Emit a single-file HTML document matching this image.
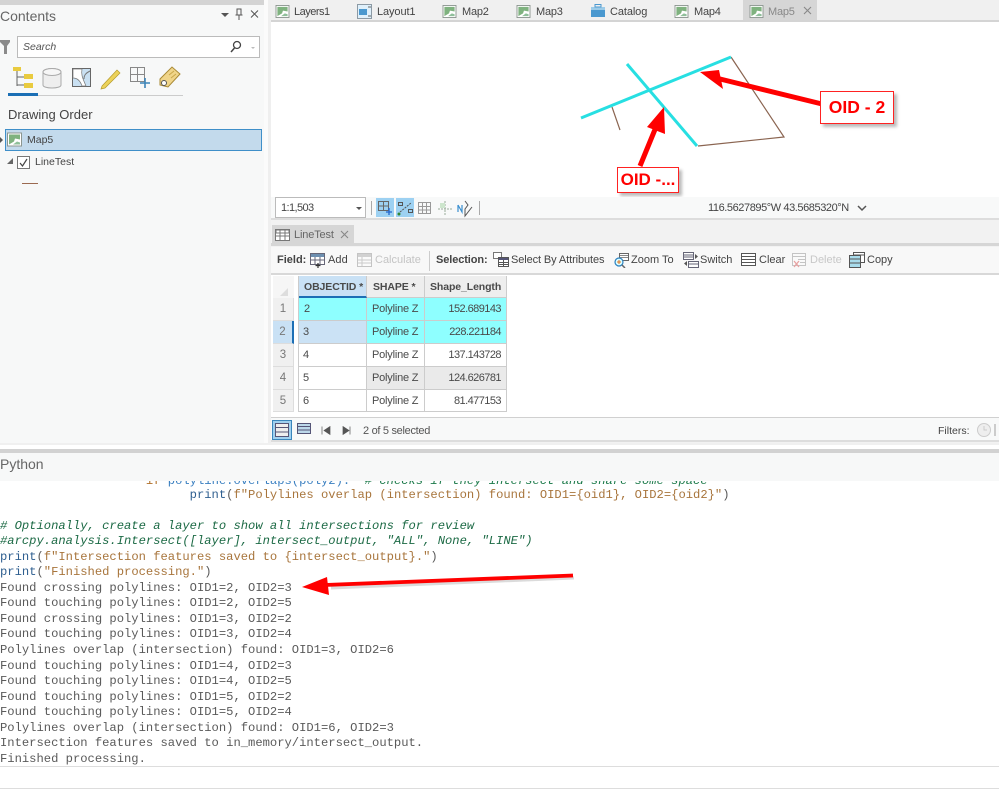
<!DOCTYPE html>
<html><head><meta charset="utf-8">
<style>
html,body{margin:0;padding:0}
body{width:999px;height:789px;overflow:hidden;background:#fff;position:relative;font-family:"Liberation Sans",sans-serif;font-size:11px;color:#444}
.a{position:absolute}
.t{position:absolute;white-space:nowrap;line-height:14px}
.ic{position:absolute;width:15px;height:13px}
.m{position:absolute;left:0;white-space:pre;font-family:"Liberation Mono",monospace;font-size:12.17px;line-height:15px;color:#5a5a5a}
.cell{position:absolute;box-sizing:border-box;line-height:23px;font-size:11px;color:#4a4a4a;border-right:1px solid #ccc;border-bottom:1px solid #ccc;padding:0 4px;white-space:nowrap}
.r{text-align:right;letter-spacing:-.55px;padding-right:5px}
.n{text-align:center;color:#777;padding:0;background:#f0f0f0;border-color:#ddd;font-size:11.5px}
.h{font-weight:bold;font-size:10.5px;line-height:22px;letter-spacing:-.1px}
</style></head><body>

<!-- shared map icon -->
<svg width="0" height="0" style="position:absolute"><defs>
<symbol id="mi" viewBox="0 0 15 14"><rect x=".5" y=".5" width="14" height="13" fill="#fff" stroke="#8c9690"/><path d="M2 2h11v5L8 6 7 9l-5 3z" fill="#7fb27f"/><path d="M6 12l4-3 3 1v2z" fill="#8fbf9a"/></symbol>
<symbol id="ti" viewBox="0 0 15 14"><rect x=".5" y="2.500" width="14" height="11" fill="#fff" stroke="#777"/><path d="M1 3h13v3H1zM1 9h13M5 3v10M10 3v10" fill="none" stroke="#777"/></symbol>
</defs></svg>

<!-- left pane -->
<div class="a" style="left:0;top:0;width:264px;height:443px;background:#f7f8f8"></div>
<div class="a" style="left:0;top:0;width:264px;height:5px;background:#d4d4d4"></div>
<div class="a" style="left:264px;top:0;width:7px;height:445px;background:#efefef"></div>
<div class="a" style="left:264px;top:0;width:4px;height:445px;background:#fbfbfb"></div>
<div class="t" style="left:0;top:7px;font-size:14px;line-height:18px;color:#666">Contents</div>
<svg class="a" style="left:218px;top:5px" width="50" height="18"><path d="M3 8h8l-4 4z" fill="#555"/><path d="M19 4h4v6h-4zM21 10v5M17.500 10h7" stroke="#555" fill="none"/><path d="M33 5.500l7 7M40 5.500l-7 7" stroke="#555" fill="none"/></svg>
<svg class="a" style="left:0;top:39px" width="12" height="16"><path d="M0 1h10v2L7 7v8H4V7L0 3z" fill="#8a8a8a"/></svg>
<div class="a" style="left:17px;top:36px;width:243px;height:22px;box-sizing:border-box;background:#fff;border:1px solid #bbb"></div>
<div class="t" style="left:23px;top:40px;font-style:italic;font-size:10.500px;color:#555">Search</div>
<svg class="a" style="left:229px;top:39px" width="30" height="16"><circle cx="8" cy="6" r="3.500" fill="none" stroke="#444" stroke-width="1.300"/><path d="M5.500 9L2 13" stroke="#444" stroke-width="1.500"/><path d="M22 8h4l-2 2z" fill="#bbb"/></svg>
<svg class="a" style="left:10px;top:64px" width="175" height="30">
<path d="M3 3h8v4H3z" fill="#e9cb3f"/><path d="M7 7v15M7 13h7M7 21h7" stroke="#666" fill="none"/><path d="M14 10h9v5h-9zM14 19h9v5h-9z" fill="#e9cb3f"/>
<ellipse cx="42" cy="8" rx="9" ry="3.500" fill="#f0f0f0" stroke="#aaa"/><path d="M33 8v13c0 4 18 4 18 0V8" fill="#eee" stroke="#aaa"/><ellipse cx="42" cy="8" rx="9" ry="3.500" fill="#f6f6f6" stroke="#aaa"/>
<path d="M62.500 4.500h18v18h-18z" fill="#c9e0f2" stroke="#666"/><path d="M63 5h9c-1 5 0 8 4 17H72c-2-6-5-8-9-8z" fill="#fff" stroke="#777" stroke-width=".7"/><path d="M80 7c-4 2-6 4-6 8" stroke="#777" fill="none"/>
<path d="M92 22l15-16 3 3-15 15-4 1z" fill="#ecd25a" stroke="#b59b2c" stroke-width=".7"/>
<path d="M120.500 3.500h14v14h-14zM127.500 3v14M120 10.500h14" fill="none" stroke="#888"/><path d="M135 14v10M130 19h10" stroke="#3c84b8" stroke-width="1.600"/>
<path d="M150 15l12-12 8 7-12 13-8-2z" fill="#f0d58a" stroke="#a98a35" stroke-width="1"/><path d="M159 11l5-4M161 14l5-4" stroke="#c9a74a"/><circle cx="154" cy="19" r="2.500" fill="#fff" stroke="#555"/>
</svg>
<div class="a" style="left:8px;top:95px;width:175px;height:1px;background:#ccc"></div>
<div class="a" style="left:8px;top:93px;width:30px;height:3px;background:#1b6fb5"></div>
<div class="t" style="left:8px;top:107px;font-size:13px;line-height:16px;color:#444">Drawing Order</div>
<div class="a" style="left:5px;top:129px;width:257px;height:22px;box-sizing:border-box;background:#c3daec;border:1px solid #3f8fc9"></div>
<div class="a" style="left:0;top:137px;width:0;height:0;border:3px solid transparent;border-left-color:#555"></div>
<svg class="ic" style="left:7px;top:132px;height:15px"><use href="#mi"/></svg>
<div class="t" style="left:27px;top:133px;font-size:10.500px">Map5</div>
<div class="a" style="left:7px;top:158px;width:0;height:0;border-style:solid;border-width:0 0 6px 6px;border-color:transparent transparent #666 transparent"></div>
<div class="a" style="left:17px;top:156px;width:13px;height:13px;box-sizing:border-box;border:1px solid #777;background:#fff"></div>
<svg class="a" style="left:17px;top:156px" width="13" height="13"><path d="M3 7l2.500 3L10 3" fill="none" stroke="#444" stroke-width="1.200"/></svg>
<div class="t" style="left:35px;top:155px;font-size:10.500px">LineTest</div>
<div class="a" style="left:22px;top:183px;width:16px;height:1px;background:#9b6a50"></div>

<!-- tabs -->
<div class="a" style="left:271px;top:0;width:728px;height:20px;background:#f0f0f0"></div>
<div class="a" style="left:271px;top:20px;width:728px;height:2px;background:#d4d4d4"></div>
<div class="a" style="left:743px;top:0;width:74px;height:20px;background:#d6d6d6"></div>
<svg class="ic" style="left:275px;top:5px"><use href="#mi"/></svg><div class="t" style="left:294px;top:5px;letter-spacing:-.5px">Layers1</div>
<svg class="a" style="left:357px;top:4px" width="15" height="15"><rect x=".5" y=".5" width="14" height="14" fill="#dff0fb" stroke="#8c9aa5"/><path d="M2 5h8v6H2z" fill="#4a98cf"/><path d="M11 3h3M11 12h3" stroke="#666"/></svg><div class="t" style="left:377px;top:5px;letter-spacing:-.1px">Layout1</div>
<svg class="ic" style="left:442px;top:5px"><use href="#mi"/></svg><div class="t" style="left:462px;top:5px;letter-spacing:-.2px">Map2</div>
<svg class="ic" style="left:516px;top:5px"><use href="#mi"/></svg><div class="t" style="left:536px;top:5px;letter-spacing:-.2px">Map3</div>
<svg class="a" style="left:590px;top:3px" width="16" height="15"><rect x="1" y="4" width="14" height="10" fill="#4a98cf"/><rect x="1" y="4" width="14" height="3" fill="#9ccbe8"/><rect x="5" y="1.500" width="6" height="2.500" fill="none" stroke="#4a98cf"/></svg><div class="t" style="left:610px;top:5px;letter-spacing:-.1px">Catalog</div>
<svg class="ic" style="left:674px;top:5px"><use href="#mi"/></svg><div class="t" style="left:694px;top:5px;letter-spacing:-.2px">Map4</div>
<svg class="ic" style="left:749px;top:5px"><use href="#mi"/></svg><div class="t" style="left:768px;top:5px;letter-spacing:-.2px;color:#888">Map5</div>
<svg class="a" style="left:803px;top:6px" width="10" height="10"><path d="M1 1l7 7M8 1L1 8" stroke="#888" stroke-width="1.100"/></svg>

<!-- map -->
<svg class="a" style="left:0;top:0" width="999" height="200">
<g fill="none" stroke="#8a6450" stroke-width="1.200">
<path d="M731 57l53 80-86 9"/><path d="M612 107l8 23"/>
</g>
<path d="M581 118L731 57M627 64l70 82" fill="none" stroke="#27dfe2" stroke-width="3"/>
<path d="M822 104L716 78" stroke="#f00" stroke-width="5" fill="none"/>
<path d="M700 72l19-2 4 19z" fill="#f00"/>
<path d="M640 166L656 127" stroke="#f00" stroke-width="5" fill="none"/>
<path d="M664 107l1 27-18-7z" fill="#f00"/>
</svg>
<div class="a" style="left:820px;top:91px;width:74px;height:33px;box-sizing:border-box;background:#fff;border:1px solid #f22;box-shadow:3px 3px 3px #bbb;color:#f00;font-weight:bold;font-size:17.500px;line-height:31px;text-align:center">OID - 2</div>
<div class="a" style="left:617px;top:167px;width:62px;height:26px;box-sizing:border-box;background:#fff;border:1px solid #f22;box-shadow:3px 3px 3px #bbb;color:#f00;font-weight:bold;font-size:17px;line-height:24px;text-align:center;white-space:nowrap">OID -...</div>

<!-- map status bar -->
<div class="a" style="left:271px;top:197px;width:728px;height:21px;background:#f8f9f9"></div>
<div class="a" style="left:271px;top:218px;width:728px;height:2px;background:#ddd"></div>
<div class="a" style="left:275px;top:197px;width:91px;height:21px;box-sizing:border-box;background:#fff;border:1px solid #bbb"></div>
<div class="t" style="left:281px;top:201px;letter-spacing:-.6px;font-size:11px">1:1,503</div>
<div class="a" style="left:356px;top:207px;width:0;height:0;border:3px solid transparent;border-top-color:#555"></div>
<div class="a" style="left:371px;top:201px;width:1px;height:14px;background:#aaa"></div>
<div class="a" style="left:376px;top:198px;width:18px;height:19px;background:#9dd1f2"></div>
<div class="a" style="left:396px;top:198px;width:18px;height:19px;background:#9dd1f2"></div>
<svg class="a" style="left:375px;top:198px" width="112" height="20">
<path d="M3.500 3.500h10v9h-10zM8.500 3.500v9M3.500 8h10" fill="none" stroke="#666"/><path d="M14 10v7M11 14h6" stroke="#26c" stroke-width="1.300"/>
<path d="M23.500 4.500h4v3h-4zM33.500 11.500h4v3h-4z" fill="none" stroke="#555"/><path d="M25 14l11-9" stroke="#555" stroke-dasharray="2 1"/><circle cx="24" cy="16" r="1.500" fill="#383"/>
<path d="M43.500 4.500h12v11h-12zM43.500 8.500h12M43.500 12h12M47.500 4.500v11M51.500 4.500v11" fill="none" stroke="#999"/>
<path d="M70 3v15M63 11h14" stroke="#9a9" stroke-dasharray="2 1"/><rect x="65" y="5" width="5" height="5" fill="#cde6cd"/>
<path d="M83 7v7M83 7l4 7V7" fill="none" stroke="#3a8fd0" stroke-width="1.200"/><path d="M90 3l3 4-3 4v7l7-9" fill="none" stroke="#555"/>
</svg>
<div class="a" style="left:479px;top:201px;width:1px;height:14px;background:#aaa"></div>
<div class="t" style="left:708px;top:201px;font-size:11px;letter-spacing:-.42px">116.5627895°W 43.5685320°N</div>
<svg class="a" style="left:856px;top:204px" width="12" height="10"><path d="M2 2l4 4 4-4" fill="none" stroke="#555" stroke-width="1.500"/></svg>

<!-- attribute table pane -->
<div class="a" style="left:271px;top:220px;width:728px;height:225px;background:#f2f2f2"></div>
<div class="a" style="left:272px;top:225px;width:82px;height:19px;background:#d6d6d6"></div>
<div class="a" style="left:271px;top:243px;width:728px;height:3px;background:#d6d6d6"></div>
<div class="a" style="left:271px;top:247px;width:728px;height:26px;background:#f8f8f8;border-bottom:2px solid #d8d8d8"></div>
<div class="a" style="left:271px;top:275px;width:728px;height:142px;background:#fff"></div>
<svg class="a" style="left:275px;top:227px" width="15" height="14"><use href="#ti"/></svg>
<div class="t" style="left:294px;top:228px;color:#666;letter-spacing:-.15px">LineTest</div>
<svg class="a" style="left:340px;top:230px" width="10" height="10"><path d="M1 1l7 7M8 1L1 8" stroke="#888" stroke-width="1.100"/></svg>

<div class="t" style="left:277px;top:253px;font-weight:bold;font-size:11px;color:#444">Field:</div>
<svg class="a" style="left:310px;top:252px" width="16" height="16"><rect x=".5" y="1.500" width="14" height="11" fill="#fff" stroke="#667"/><rect x="1" y="2" width="13" height="3" fill="#6d8fb0"/><path d="M1 8h13M5 5v8M10 5v8" stroke="#667"/><path d="M8 11v5M5.500 13.500h5" stroke="#333" stroke-width="1.200"/></svg>
<div class="t" style="left:328px;top:253px;letter-spacing:.1px">Add</div>
<svg class="a" style="left:357px;top:252px;opacity:.4" width="16" height="16"><rect x=".5" y="1.500" width="14" height="13" fill="#fff" stroke="#777"/><rect x="1" y="2" width="13" height="3" fill="#999"/><path d="M1 8h13M1 11h13M5 5v9" stroke="#888"/></svg>
<div class="t" style="left:375px;top:253px;color:#c4c4c4">Calculate</div>
<div class="a" style="left:429px;top:251px;width:1px;height:20px;background:#ccc"></div>
<div class="t" style="left:436px;top:253px;font-weight:bold;font-size:11px;color:#444;letter-spacing:-.1px">Selection:</div>
<svg class="a" style="left:493px;top:252px" width="16" height="16"><rect x=".5" y=".5" width="8" height="6" fill="#fff" stroke="#777"/><rect x="5.500" y="5.500" width="10" height="9" fill="#fff" stroke="#555"/><rect x="6" y="6" width="9" height="2" fill="#557"/><path d="M6 10.500h9M6 12.500h9M10.500 8v6" stroke="#555"/></svg>
<div class="t" style="left:511px;top:253px;letter-spacing:-.1px">Select By Attributes</div>
<svg class="a" style="left:613px;top:252px" width="16" height="16"><rect x="6.500" y="1.500" width="9" height="7" fill="#fff" stroke="#666"/><path d="M7 3.500h8M7 5.500h8" stroke="#888"/><circle cx="6" cy="10" r="4" fill="#dff" stroke="#2a80c0" stroke-width="1.200"/><path d="M6 8v4M4 10h4" stroke="#e07020"/><path d="M9 13l3 3" stroke="#666" stroke-width="1.500"/></svg>
<div class="t" style="left:631px;top:253px;">Zoom To</div>
<svg class="a" style="left:683px;top:252px" width="16" height="16"><rect x=".5" y=".5" width="10" height="7" fill="#fff" stroke="#667"/><path d="M1 3h9M1 5h9" stroke="#667"/><rect x="5.500" y="9.500" width="10" height="6" fill="#fff" stroke="#667"/><path d="M6 12h9" stroke="#667"/><path d="M12 2l3 2.500L12 7zM4 9l-3 2.500L4 14z" fill="#555"/></svg>
<div class="t" style="left:700px;top:253px;">Switch</div>
<svg class="a" style="left:741px;top:253px" width="15" height="13"><rect x=".5" y=".5" width="14" height="12" fill="#fff" stroke="#555"/><path d="M1 3.500h13M1 6.500h13M1 9.500h13" stroke="#555"/></svg>
<div class="t" style="left:759px;top:253px;">Clear</div>
<svg class="a" style="left:792px;top:253px;opacity:.4" width="15" height="15"><rect x=".5" y=".5" width="13" height="12" fill="#fff" stroke="#777"/><path d="M1 3.500h12M6 6.500h7M8 9.500h5" stroke="#777"/><path d="M2 8l5 6M7 8l-5 6" stroke="#d02020" stroke-width="1.300"/></svg>
<div class="t" style="left:810px;top:253px;color:#c8c8c8">Delete</div>
<svg class="a" style="left:849px;top:252px" width="16" height="16"><rect x="4.500" y=".5" width="11" height="10" fill="#fff" stroke="#555"/><path d="M5 3h10" stroke="#555"/><rect x=".5" y="3.500" width="11" height="12" fill="#a9dcec" stroke="#555"/><path d="M1 7h10M1 11h10" stroke="#555"/></svg>
<div class="t" style="left:867px;top:253px;">Copy</div>

<!-- table -->
<div class="a" style="left:273px;top:276px;width:21px;height:22px;background:#f6f6f6"></div>
<div class="a" style="left:280px;top:288px;width:0;height:0;border-style:solid;border-width:0 0 8px 8px;border-color:transparent transparent #ddd transparent"></div>
<div class="cell n" style="left:273px;top:298px;width:21px;height:23px">1</div>
<div class="cell n" style="left:273px;top:321px;width:21px;height:23px;background:#c9e1f5;border-right:2px solid #1d6fb5">2</div>
<div class="cell n" style="left:273px;top:344px;width:21px;height:23px">3</div>
<div class="cell n" style="left:273px;top:367px;width:21px;height:23px">4</div>
<div class="cell n" style="left:273px;top:390px;width:21px;height:22px">5</div>

<div class="cell h" style="left:298px;top:276px;width:69px;height:22px;background:#c9e1f5;border-bottom:2px solid #1d6fb5;padding:0 0 0 6px">OBJECTID *</div>
<div class="cell h" style="left:367px;top:276px;width:58px;height:22px;background:#eeeeee;padding:0 0 0 6px">SHAPE *</div>
<div class="cell h" style="left:425px;top:276px;width:82px;height:22px;background:#eeeeee;padding:0 0 0 5px">Shape_Length</div>

<div class="cell" style="left:298px;top:298px;width:69px;height:23px;background:#8effff;padding-left:6px">2</div>
<div class="cell" style="left:367px;top:298px;width:58px;height:23px;background:#8effff;padding-left:5px;letter-spacing:-.2px">Polyline Z</div>
<div class="cell r" style="left:425px;top:298px;width:82px;height:23px;background:#8effff">152.689143</div>
<div class="cell" style="left:298px;top:321px;width:69px;height:23px;background:#cbe2f5;padding-left:5px">3</div>
<div class="cell" style="left:367px;top:321px;width:58px;height:23px;background:#8effff;padding-left:5px;letter-spacing:-.2px">Polyline Z</div>
<div class="cell r" style="left:425px;top:321px;width:82px;height:23px;background:#8effff">228.221184</div>
<div class="cell" style="left:298px;top:344px;width:69px;height:23px;background:#fff;padding-left:5px">4</div>
<div class="cell" style="left:367px;top:344px;width:58px;height:23px;background:#fff;padding-left:5px;letter-spacing:-.2px">Polyline Z</div>
<div class="cell r" style="left:425px;top:344px;width:82px;height:23px;background:#fff">137.143728</div>
<div class="cell" style="left:298px;top:367px;width:69px;height:23px;background:#fff;padding-left:5px">5</div>
<div class="cell" style="left:367px;top:367px;width:58px;height:23px;background:#eaeaea;padding-left:5px;letter-spacing:-.2px">Polyline Z</div>
<div class="cell r" style="left:425px;top:367px;width:82px;height:23px;background:#eaeaea">124.626781</div>
<div class="cell" style="left:298px;top:390px;width:69px;height:22px;background:#fff;padding-left:5px">6</div>
<div class="cell" style="left:367px;top:390px;width:58px;height:22px;background:#fff;padding-left:5px;letter-spacing:-.2px">Polyline Z</div>
<div class="cell r" style="left:425px;top:390px;width:82px;height:22px;background:#fff">81.477153</div>
<div class="a" style="left:298px;top:276px;width:1px;height:136px;background:#ccc"></div>

<!-- table footer -->
<div class="a" style="left:271px;top:417px;width:728px;height:1px;background:#d0d0d0"></div>
<div class="a" style="left:271px;top:418px;width:728px;height:24px;background:#f8f9f9"></div>
<div class="a" style="left:271px;top:440px;width:728px;height:2px;background:#ddd"></div>
<div class="a" style="left:272px;top:420px;width:20px;height:20px;box-sizing:border-box;background:#9fd0ef;border:1px solid #3a86bc"></div>
<svg class="a" style="left:275px;top:423px" width="14" height="14"><rect x=".5" y=".5" width="13" height="13" fill="#eee" stroke="#557"/><path d="M1 4.500h12M1 9h12" stroke="#557"/></svg>
<svg class="a" style="left:297px;top:423px" width="14" height="11"><rect x=".5" y=".5" width="13" height="10" fill="#bcd8ea" stroke="#557"/><path d="M1 3.500h12M1 7h12" stroke="#557"/></svg>
<svg class="a" style="left:321px;top:426px" width="32" height="12"><path d="M1 .5v8M9 .500L3 4.500l6 4zM22 .500l6 4-6 4zM29 .5v8" fill="#555" stroke="#555" stroke-width=".7"/></svg>
<div class="t" style="left:363px;top:424px;color:#555;letter-spacing:-.3px">2 of 5 selected</div>
<div class="t" style="left:938px;top:424px;font-size:10.500px;color:#444">Filters:</div>
<svg class="a" style="left:976px;top:422px" width="23" height="16"><circle cx="8" cy="8" r="6.500" fill="#eee" stroke="#ccc"/><path d="M8 4v4h3" stroke="#ccc" fill="none"/><path d="M19 2v12" stroke="#ccc" stroke-width="2"/></svg>

<!-- python pane -->
<div class="a" style="left:0;top:443px;width:999px;height:2px;background:#f0f0f0"></div>
<div class="a" style="left:0;top:449px;width:999px;height:4px;background:#d2d2d2"></div>
<div class="a" style="left:0;top:453px;width:999px;height:28px;background:#f7f8f8"></div>
<div class="t" style="left:0;top:455px;font-size:14px;line-height:18px;color:#666">Python</div>
<div class="a" style="left:0;top:481px;width:999px;height:285px;background:#fff;overflow:hidden">
<div class="m" style="top:-7px;color:#3a7fc0">                    <span style="color:#b0702a">if</span> polyline.overlaps(poly2):  <span style="color:#1c7a4a;font-style:italic"># checks if they intersect and share some space</span></div>
<div class="m" style="top:7px"><span style="color:#2f5f90">                          print</span>(<span style="color:#a8753c">f"Polylines overlap (intersection) found: OID1={oid1}, OID2={oid2}"</span>)</div>
<div class="m" style="top:38px;color:#1c6a45;font-style:italic"># Optionally, create a layer to show all intersections for review</div>
<div class="m" style="top:53px;color:#1c6a45;font-style:italic">#arcpy.analysis.Intersect([layer], intersect_output, "ALL", None, "LINE")</div>
<div class="m" style="top:69px"><span style="color:#2f5f90">print</span>(<span style="color:#a8753c">f"Intersection features saved to {intersect_output}."</span>)</div>
<div class="m" style="top:84px"><span style="color:#2f5f90">print</span>(<span style="color:#a8753c">"Finished processing."</span>)</div>
<div class="m" style="top:100px">Found crossing polylines: OID1=2, OID2=3</div>
<div class="m" style="top:115px">Found touching polylines: OID1=2, OID2=5</div>
<div class="m" style="top:131px">Found crossing polylines: OID1=3, OID2=2</div>
<div class="m" style="top:146px">Found touching polylines: OID1=3, OID2=4</div>
<div class="m" style="top:162px">Polylines overlap (intersection) found: OID1=3, OID2=6</div>
<div class="m" style="top:178px">Found touching polylines: OID1=4, OID2=3</div>
<div class="m" style="top:193px">Found touching polylines: OID1=4, OID2=5</div>
<div class="m" style="top:209px">Found touching polylines: OID1=5, OID2=2</div>
<div class="m" style="top:224px">Found touching polylines: OID1=5, OID2=4</div>
<div class="m" style="top:240px">Polylines overlap (intersection) found: OID1=6, OID2=3</div>
<div class="m" style="top:255px">Intersection features saved to in_memory/intersect_output.</div>
<div class="m" style="top:271px">Finished processing.</div>
</div>
<svg class="a" style="left:295px;top:565px" width="285" height="40">
<path d="M279 13L36 23" stroke="#999" stroke-width="3" opacity=".35"/>
<path d="M278 10.500L30 20" stroke="#f00" stroke-width="3.800" fill="none"/>
<path d="M7 22L32 12l2 18z" fill="#f00"/>
</svg>
<div class="a" style="left:0;top:766px;width:999px;height:1px;background:#ddd"></div>
<div class="a" style="left:0;top:788px;width:999px;height:1px;background:#ddd"></div>
</body></html>
